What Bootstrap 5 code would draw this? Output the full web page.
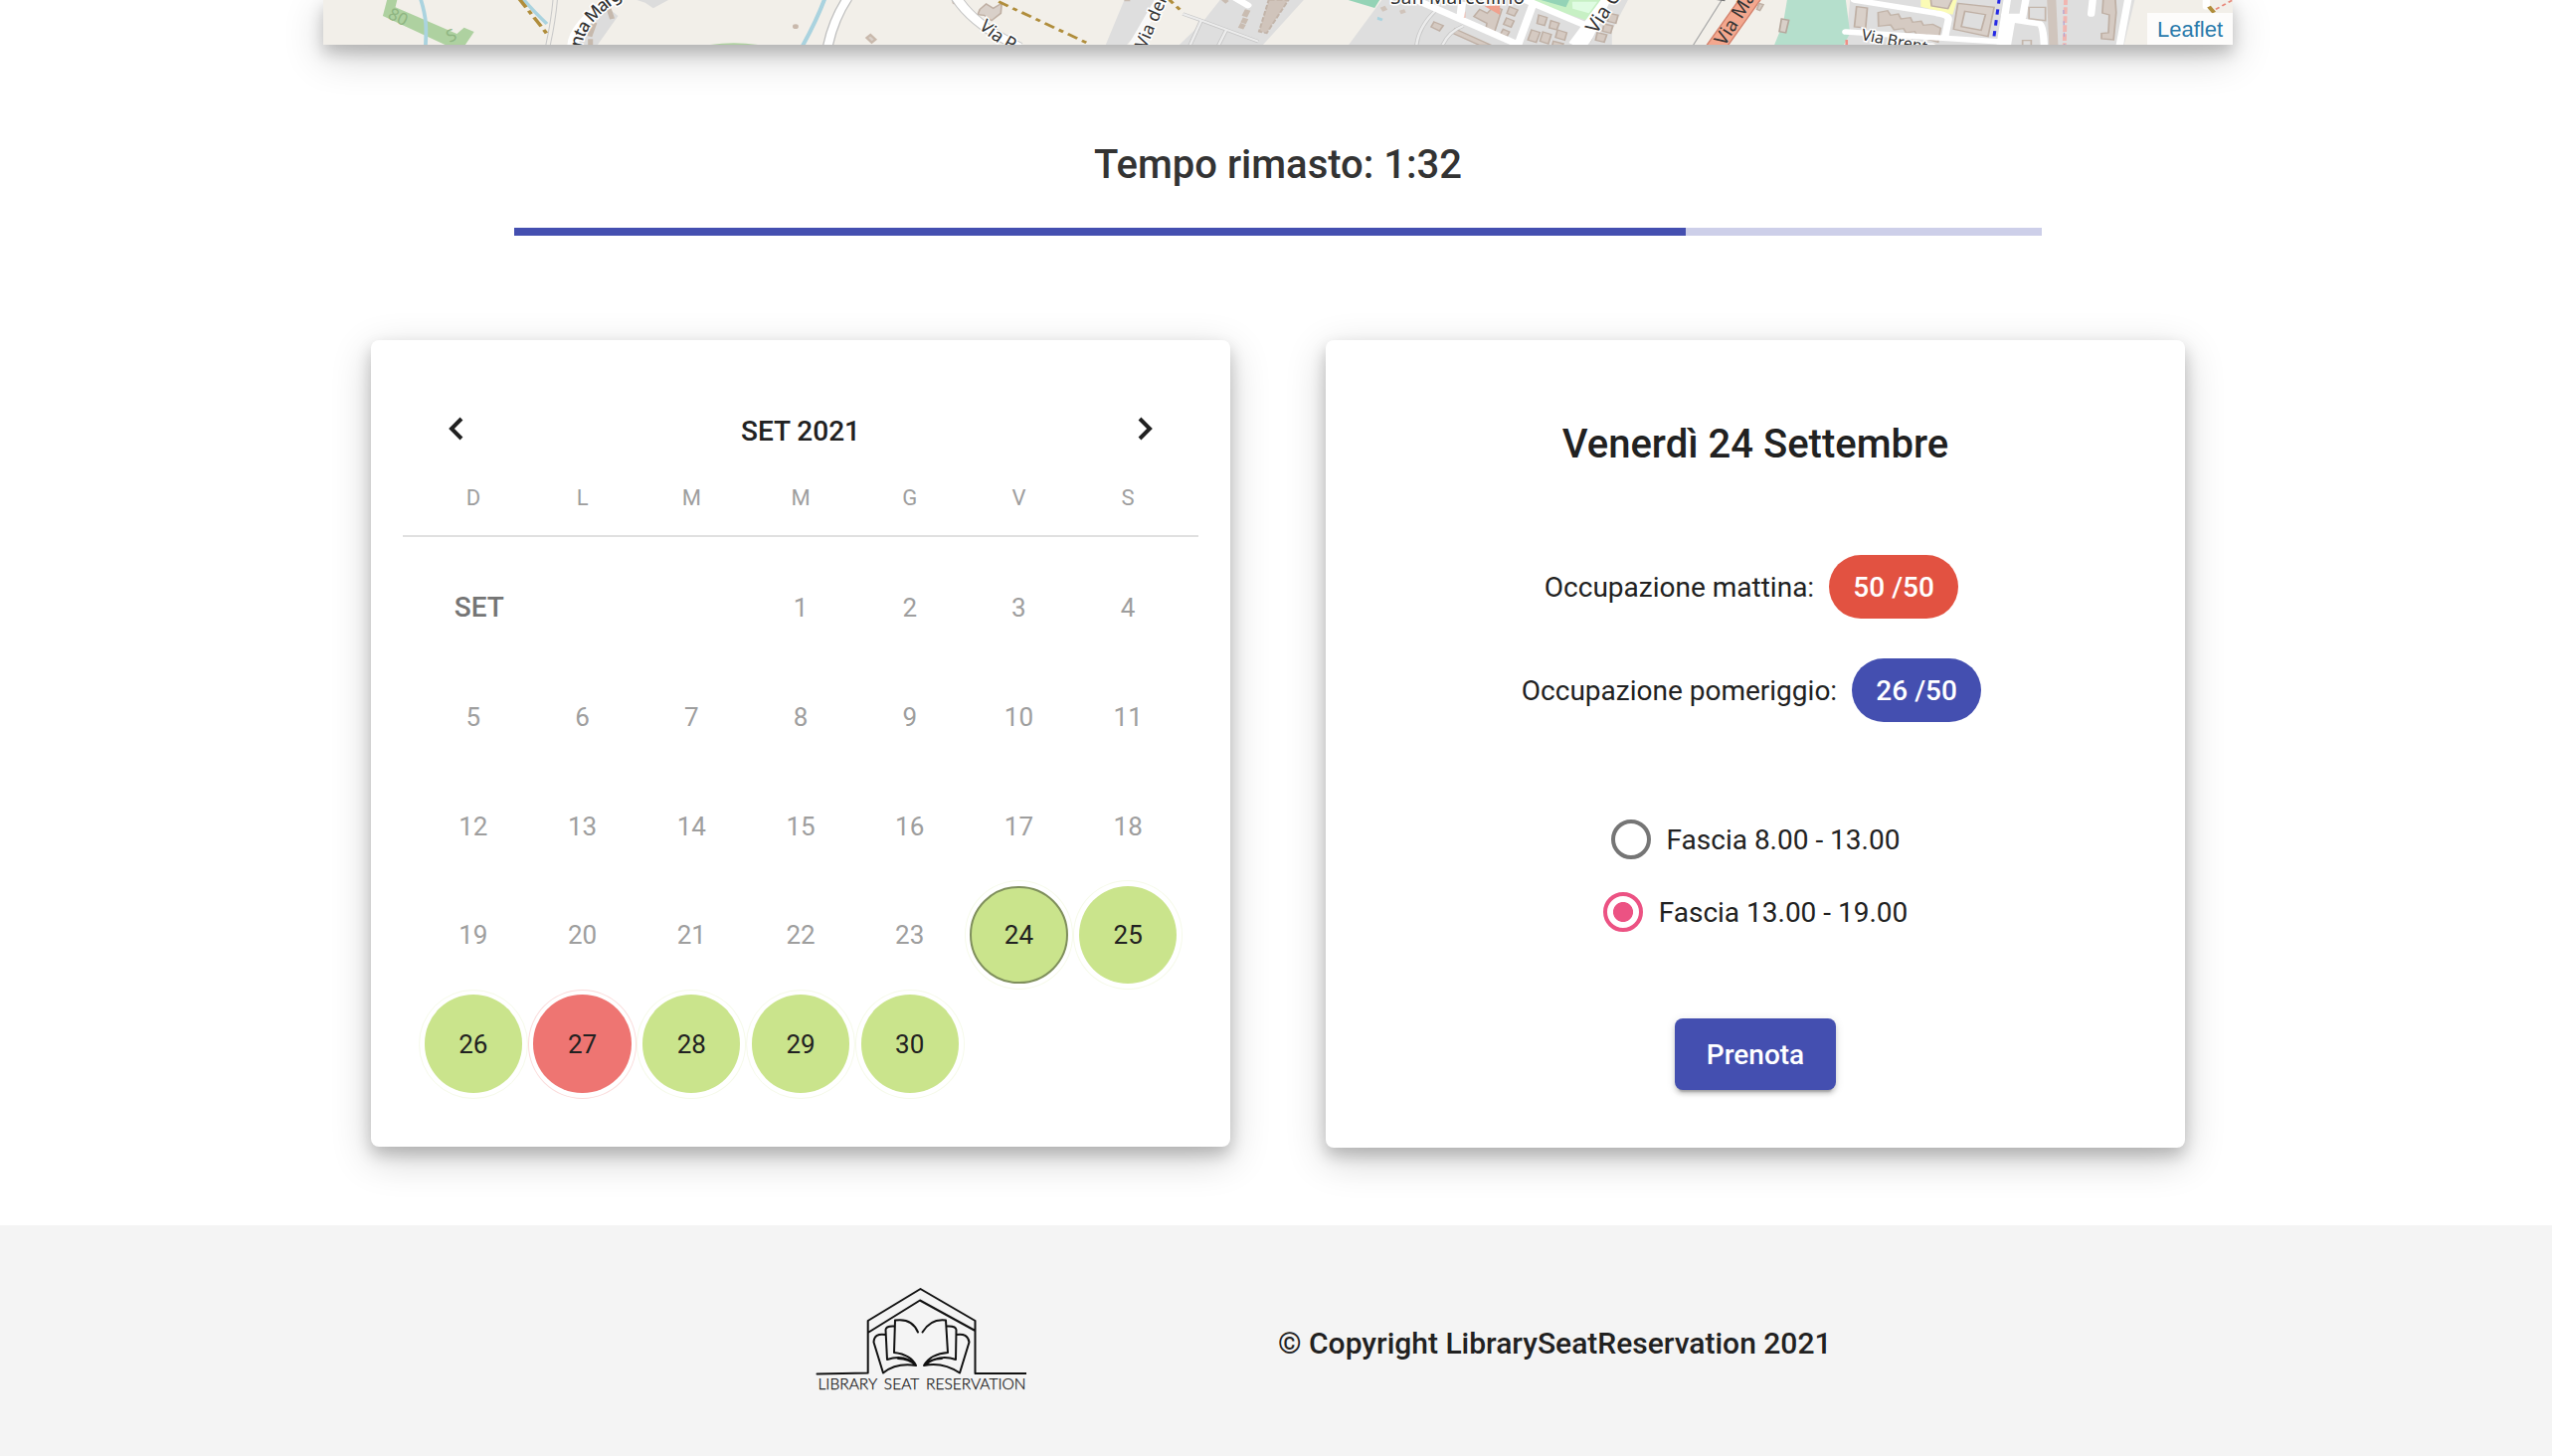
<!DOCTYPE html>
<html lang="it">
<head>
<meta charset="utf-8">
<meta name="viewport" content="width=device-width, initial-scale=1">
<title>Library Seat Reservation</title>
<link rel="stylesheet" href="https://cdn.jsdelivr.net/npm/bootstrap@5.3.0/dist/css/bootstrap.min.css">
<style>
body{font-family:Roboto,"Liberation Sans",sans-serif;font-size:28px;line-height:1.5;color:#212121;background:#fff;overflow:hidden}
.page-shell{padding-left:4px;height:1232px}
.raised{box-shadow:0 8px 16px rgba(0,0,0,.2),0 12px 40px rgba(0,0,0,.19)}
.map-strip{width:1920px;height:45px}
.map-strip svg{display:block}
.map-credit{right:0;bottom:0;width:86px;height:32px;background:rgba(255,255,255,.8);font:22px/34px "Liberation Sans",Arial,sans-serif;color:#2a7aab}
.time-left{font-size:40px;line-height:48px;font-weight:500;color:#333;margin-top:97px}
.time-bar{width:1536px;height:8px;border-radius:0;background:#cdcfe9;margin-top:39px}
.time-bar .progress-bar{background:#444fb0}
.panels{margin-top:105px;gap:96px}
.panel{width:864px;border:0;border-radius:8px}
.cal{height:811px;padding:62px 32px 0}
.cal-head{height:60px;padding:0 46px}
.cal-head svg{display:block;margin-top:-6px}
.cal-title{font-weight:500}
.week{display:grid;grid-template-columns:repeat(7,1fr);padding:0 16px;text-align:center}
.names{height:76px;border-bottom:2px solid #e0e0e0;font-size:22px;line-height:74px;color:#9e9e9e}
.days{margin-top:16px;grid-auto-rows:109.71px;font-size:26px;color:#9e9e9e}
.days>*{display:flex;align-items:center;justify-content:center;padding-top:2px}
.days .month{font-size:28px;font-weight:500;color:#757575;padding-left:12px;padding-top:1px}
.days .open,.days .full{border-radius:50%;border:1px solid #f6faea;color:#212121;padding-top:0}
.days .full{border-color:#fbdcdb}
.open span,.full span{width:98.4px;height:98.4px;padding-top:2px;border-radius:50%;background:#cae48c;display:flex;align-items:center;justify-content:center}
.full span{background:#ee7572}
.picked span{border:2px solid #7f8f5c}
.booking{height:812px;padding-top:79px}
.day-title{font-size:40px;line-height:52px;font-weight:500}
.seats{height:64px;padding-right:8px;gap:15px}
.seats>span:first-child,.slot span{padding-top:2px}
.seats .badge{width:130px;height:64px;font-size:28px;font-weight:500;line-height:66px;padding:0}
.busy{background:#e25241}.free{background:#444fb0}
.slot{height:40px;gap:16px}
.dot{width:40px;height:40px;margin:0;border:4px solid #757575}
.dot.form-check-input:checked{background:radial-gradient(circle,#ec5283 0 9.6px,#fff 10.4px);border-color:#ec5283}
.book{width:162px;height:72px;border:0;border-radius:8px;background:#444fb0;font-size:28px;font-weight:500;line-height:73px;padding:0;color:#fff;box-shadow:0 6px 2px -4px rgba(0,0,0,.2),0 4px 4px rgba(0,0,0,.14),0 2px 10px rgba(0,0,0,.12)}
.foot{height:232px;background:#f4f4f4;padding-left:820px;gap:253px}
.foot p{font-size:30px;font-weight:500;padding-top:4px}
</style>
<script src="https://cdn.jsdelivr.net/npm/bootstrap@5.3.0/dist/js/bootstrap.bundle.min.js"></script>
</head>
<body>
<main class="page-shell d-flex flex-column align-items-center">
<div class="map-strip raised position-relative flex-shrink-0">
<svg width="1920" height="45" viewBox="0 0 1920 45" fill="none">
<defs><path id="w1" d="M260 48Q262 22 306 -6"/><path id="w2" d="M659 28Q674 42 696 53"/></defs>
<rect width="1920" height="45" fill="#f2efe9"/>
<!-- western fields -->
<g transform="translate(-15) scale(.4209 .3333)">
<path d="M190 -10 L214 -10 L208 22 L355 102 L372 83 L396 96 L374 137 L330 137 L178 48Z" fill="#aed1a0"/>
<path d="M268 -5C284 60 282 90 280 140M512 -5Q535 30 570 72" stroke="#aad3df" stroke-width="9"/>
<path d="M1234 -5Q1215 60 1180 140" stroke="#aad3df" stroke-width="10"/>
<path d="M503 -5L574 108" stroke="#b08d3b" stroke-width="9" stroke-dasharray="32 12 12 12"/>
<path d="M590 -5Q586 60 572 140" stroke="#c9c9c9" stroke-width="13"/><path d="M590 -5Q586 60 572 140" stroke="#f2efe9" stroke-width="8"/>
<path d="M785 0L860 0L824 25L805 8ZM712 20L740 48L690 137L640 137L665 70Z" fill="#dcdcdc"/>
<path d="M718 27l8 30M684 68l-12 42M674 118v20" stroke="#c6b9ad" stroke-width="12"/>
<path d="M632 140Q634 70 735 -8" stroke="#fff" stroke-width="27"/>
<path d="M1288 -5Q1254 60 1241 140" stroke="#bdbdbd" stroke-width="26"/><path d="M1288 -5Q1254 60 1241 140" stroke="#fff" stroke-width="20"/>
<path d="M1334 114l9-9 12 14-9 9z" stroke="#c9b9ac" stroke-width="6" fill="#d9d0c9"/>
<circle cx="1164" cy="80" r="7" fill="#c9b9ac"/><circle cx="1545" cy="6" r="7" fill="#c9b9ac"/>
<path d="M955 136Q1015 124 1080 136Z" fill="#aed1a0"/>
<path d="M1540 -5L1585 55" stroke="#bbb" stroke-width="13"/><path d="M1540 -5L1585 55" stroke="#fff" stroke-width="9"/>
</g>
<!-- village centre -->
<g transform="translate(635) scale(.4209 .3333)">
<path d="M405 0L500 0L410 137L360 137ZM635 -2H835L735 137H535L590 70ZM1020 0H1570V137H940Z" fill="#dedede"/>
<path d="M940 0H1015L1003 24Z" fill="#94d3b6"/><path d="M1380 0H1570L1530 70L1390 12Z" fill="#c7f0c4"/><path d="M1400 0H1468L1460 22Z" fill="#94d3b6"/><path d="M1475 5L1535 5L1515 40L1476 26Z" fill="#dffce2"/>
<path d="M60 28L75 12L92 25L112 10L110 40L88 62L70 46L55 44Z" fill="#d9d0c9" stroke="#bfafa3" stroke-width="4"/>
<path d="M750 0L797 0L745 100L727 95Z" fill="#d0c4bb" stroke="#c3b5aa" stroke-width="5" stroke-dasharray="14 5"/>
<path d="M650 -2l-8 8M700 30l-8 20M695 55l-6 15M689 72l-6 14M412 -2v6" stroke="#c9bcb1" stroke-width="14"/>
<path d="M1022 20l6 12M1068 30l4 10" stroke="#d0c4bb" stroke-width="13"/><path d="M1010 50l13 6-3 8-11-5z" fill="#aad3df"/>
<path d="M1145 66l22 11-9 16-20-12zM1195 87l86 49h-28l-64-36z" fill="#d5cac2" stroke="#bfb0a5" stroke-width="4"/>
<path d="M1240 50l14-22 18 12 15-20 20 8-18 70-20-12 2-16z" fill="#d5cac2" stroke="#bfb0a5" stroke-width="4"/>
<path d="M1325 20l20 10-8 18-18-8zM1318 54l18 9-7 19-18-9zM1310 88l15 8-6 14-15-8z" fill="#d5cac2" stroke="#bfb0a5" stroke-width="4"/>
<path d="M1395 45l20 8-6 24-18-6zM1424 62l20 8-6 20-18-6zM1378 90l20 8-9 30-20-8zM1405 96l20 8-7 28-20-8zM1440 90l22 9-5 22-22-8zM1430 124l24 8-3 6h-24z" fill="#d5cac2" stroke="#bfb0a5" stroke-width="4"/>
<path d="M1545 30l25 8v20l-24-10zM1540 64l26 10-6 20-24-8zM1526 98l24 12-4 26h-26z" fill="#d5cac2" stroke="#bfb0a5" stroke-width="4"/>
<path d="M1215 35v22M1278 22l20-2v16z" stroke="#f0a18e" stroke-width="9"/>
<path d="M545 42L590 62L725 125M588 64L562 137M648 92L630 137M1150 30Q1108 80 1103 137M1215 78Q1180 95 1165 137" stroke="#c6c6c6" stroke-width="10"/><path d="M545 42L590 62L725 125M588 64L562 137M648 92L630 137M1150 30Q1108 80 1103 137M1215 78Q1180 95 1165 137" stroke="#ececec" stroke-width="6"/>
<path d="M5 -5Q45 75 155 142" stroke="#c4c4c4" stroke-width="28"/><path d="M5 -5Q45 75 155 142" stroke="#fff" stroke-width="23"/>
<path d="M490 -5Q460 60 425 137" stroke="#f8f8f8" stroke-width="20"/>
<path d="M665 -10L700 16" stroke="#fff" stroke-width="18" stroke-linecap="round"/>
<path d="M1085 -10L1350 137M1345 137L1382 10M1360 -2L1510 78M1212 5L1208 50" stroke="#fff" stroke-width="19"/>
<path d="M1585 -30L1485 140" stroke="#fff" stroke-width="42"/>
<path d="M105 5L325 135M505 -10L545 38" stroke="#b08d3b" stroke-width="8" stroke-dasharray="26 13 12 13"/>
</g>
<!-- eastern district -->
<g transform="translate(1275) scale(.43367 .33333)">
<path d="M45 0H85L30 137H-5Z" fill="#dedede"/>
<path d="M600 0H1260L1235 137H590Z" fill="#dedede"/>
<path d="M454 0H590L600 100L585 137H424L445 70Z" fill="#b5dfcc"/>
<path d="M441 57l17 4-7 38-15-4z" fill="#d9d0c9" stroke="#b5a79c" stroke-width="4"/>
<path d="M305 -5L236 137" stroke="#aaa" stroke-width="3"/><path d="M290 -2l20 4" stroke="#777" stroke-width="4"/>
<path d="M378 -20L285 150" stroke="#d4826d" stroke-width="47"/><path d="M378 -20L285 150" stroke="#f3a78e" stroke-width="40"/>
<path d="M42 40l20 6-5 24-19-6zM30 72l20 6-5 22-19-6zM14 98l22 7-6 22-20-6zM389 10l10 4-8 18-7-4z" fill="#d5cac2" stroke="#bfb0a5" stroke-width="4"/>
<path d="M764 0H848L838 44L764 20Z" fill="#fbfbb5"/>
<path d="M787 -2h50l-10 28-38-8zM615 20l25 4-4 60-26-3z" fill="#d9d0c9" stroke="#bfb0a5" stroke-width="4"/>
<path d="M665 38l22-6 7 14 18-4 6 15 22-4 5 14 20-3 5 12 22-3 18 12-6 42-22-8-4-14-20 6-8-16-20 4-6-13-22 4-8-15-28 4z" fill="#d5cac2" stroke="#c2b4a9" stroke-width="4"/>
<path d="M850 10L934 22L920 110L840 88ZM866 34L858 80L904 91L914 44Z" fill-rule="evenodd" fill="#d9d0c9" stroke="#bfb0a5" stroke-width="4"/>
<path d="M610 0L800 40Q830 45 828 60L820 112M590 96L950 126M1008 -5L1000 52M965 -5L948 137M960 56L1040 72Q1048 80 1050 137M1245 -5L1225 137M1163 -5L1159 42M1426 -5L1426 20" stroke="#fff" stroke-width="17" stroke-linecap="round"/>
<path d="M950 52H1000M972 62L962 137" stroke="#fff" stroke-width="22"/>
<path d="M946 -5L933 118" stroke="#2529e5" stroke-width="7" stroke-dasharray="16 17"/>
<path d="M1067 -5L1072 137" stroke="#d0c5bd" stroke-width="21"/>
<path d="M1100 -5L1097 137" stroke="#f1b6b1" stroke-width="9" stroke-dasharray="20 7"/>
<path d="M1095 30L1097 137" stroke="#b3a6d5" stroke-width="3" stroke-dasharray="12 22"/>
<path d="M1187 -2h28l2 40-6 82-28-3v-16l16-2 2-54-16-6z" fill="#d5cac2" stroke="#bfb0a5" stroke-width="4"/>
<path d="M1015 22h38v40l-38-6zM1000 122h20v15h-20z" stroke="#c4b6ab" stroke-width="4"/>
<path d="M1432 20L1444 38" stroke="#b08d3b" stroke-width="10"/><path d="M1448 28L1487 0" stroke="#e88a7c" stroke-width="5" stroke-dasharray="10 8"/>
<path d="M592 120v17" stroke="#ef8f86" stroke-width="6"/>
</g>
<g font-family="Noto Sans,sans-serif" font-size="18" fill="#333" stroke="#fff" stroke-width="3" paint-order="stroke">
<text font-size="17.5" font-weight="500"><textPath href="#w1" textLength="67">nta Marg</textPath></text>
<text><textPath href="#w2">Via Po</textPath></text>
<text transform="translate(827 50) rotate(-67)" font-size="17.5">Via del F</text>
<text x="1073" y="4" textLength="135" font-size="19">San Marcellino</text>
<text transform="translate(1280 35) rotate(-57)" font-size="20">Via C</text>
<text transform="translate(1409 47) rotate(-58)" font-size="19" stroke="#f3a78e" stroke-width="1">Via Ma</text>
<text transform="translate(1546 40) rotate(11)" font-size="16" textLength="76">Via Brenta</text>
</g>
<g font-family="Noto Sans,sans-serif" font-size="17" fill="#8fb582"><text transform="translate(64 18) rotate(26)">80</text><text transform="translate(127 43) rotate(-25)">S</text></g>
</svg>
<div class="map-credit position-absolute text-center">Leaflet</div>
</div>
<h2 class="time-left mb-0">Tempo rimasto: 1:32</h2>
<div class="progress time-bar flex-shrink-0"><div class="progress-bar" style="width:76.67%"></div></div>
<section class="panels d-flex align-items-start">
<div class="card panel raised cal">
<div class="cal-head d-flex align-items-center justify-content-between">
<svg width="15" height="24" viewBox="0 0 15 24"><path d="M13 2L3 12L13 22" fill="none" stroke="#212121" stroke-width="4"/></svg>
<span class="cal-title">SET 2021</span>
<svg width="15" height="24" viewBox="0 0 15 24"><path d="M2 2L12 12L2 22" fill="none" stroke="#212121" stroke-width="4"/></svg>
</div>
<div class="week names"><span>D</span><span>L</span><span>M</span><span>M</span><span>G</span><span>V</span><span>S</span></div>
<div class="week days">
<span class="month">SET</span><span></span><span></span><span>1</span><span>2</span><span>3</span><span>4</span>
<span>5</span><span>6</span><span>7</span><span>8</span><span>9</span><span>10</span><span>11</span>
<span>12</span><span>13</span><span>14</span><span>15</span><span>16</span><span>17</span><span>18</span>
<span>19</span><span>20</span><span>21</span><span>22</span><span>23</span><div class="open picked"><span>24</span></div><div class="open"><span>25</span></div>
<div class="open"><span>26</span></div><div class="full"><span>27</span></div><div class="open"><span>28</span></div><div class="open"><span>29</span></div><div class="open"><span>30</span></div>
</div>
</div>
<div class="card panel raised booking align-items-center">
<h3 class="day-title mb-0">Venerdì 24 Settembre</h3>
<div class="seats d-flex align-items-center" style="margin-top:85px"><span>Occupazione mattina:</span><span class="badge rounded-pill busy">50 /50</span></div>
<div class="seats d-flex align-items-center" style="margin-top:40px"><span>Occupazione pomeriggio:</span><span class="badge rounded-pill free">26 /50</span></div>
<label class="slot d-flex align-items-center" style="margin-top:98px"><input class="form-check-input dot" type="radio" name="slot"><span>Fascia 8.00 - 13.00</span></label>
<label class="slot d-flex align-items-center" style="margin-top:33px"><input class="form-check-input dot" type="radio" name="slot" checked><span>Fascia 13.00 - 19.00</span></label>
<button class="btn book" style="margin-top:87px">Prenota</button>
</div>
</section>
</main>
<footer class="foot d-flex align-items-center">
<svg width="212" height="108" viewBox="820 1294 212 108" fill="none" stroke="#111" stroke-width="2" stroke-linejoin="round" stroke-linecap="round">
<path d="M821.5 1381.5L872.7 1380.5V1328L925.5 1296L980.5 1328V1381H1031.5M873.5 1339.5L925 1307.5L980.5 1338"/>
<path d="M923 1339.5Q917 1325 900 1327.5L899 1360Q916 1362 921 1373Q910 1361 892 1367L890.5 1337Q891 1333 899 1333.5M890.5 1342Q879 1340 878.5 1349.5L888 1380.5Q901 1370 921 1373Q914 1366 903 1366"/>
<path d="M927.5 1339.5Q936 1325.5 951 1327.5L953 1360Q936 1361 929 1373Q944 1361 961 1367L961.5 1337Q961 1333 952 1333.5M961.5 1342Q973 1340 974.5 1349.5L965 1380.5Q948 1369 929 1373Q936 1366 947 1366"/>
<text x="822.5" y="1397" font-family="Lato,sans-serif" font-weight="300" font-size="15.5" word-spacing="3" textLength="209" fill="#111" stroke="#111" stroke-width=".25">LIBRARY SEAT RESERVATION</text>
</svg>
<p class="mb-0">© Copyright LibrarySeatReservation 2021</p>
</footer>
</body>
</html>
